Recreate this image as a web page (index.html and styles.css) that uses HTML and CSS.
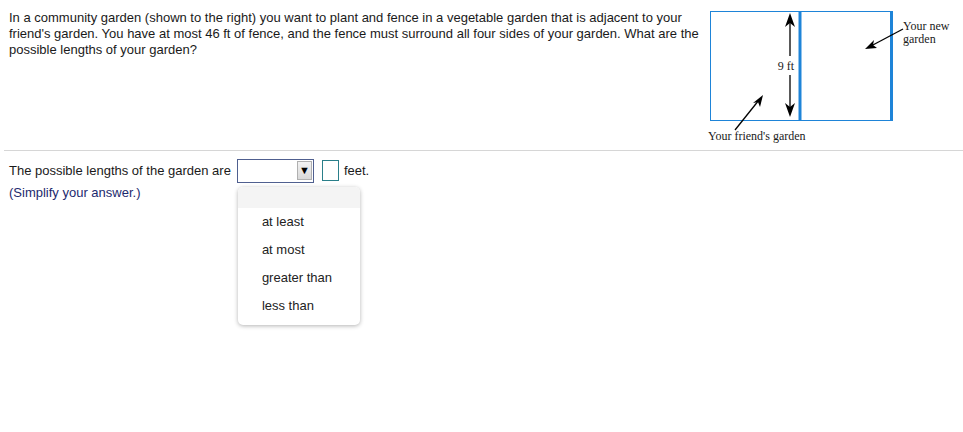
FILE: index.html
```html
<!DOCTYPE html>
<html>
<head>
<meta charset="utf-8">
<link rel="stylesheet" href="styles.css">
</head>
<body>
<div class="question">
  <p class="prompt">In a community garden (shown to the right) you want to plant and fence in a vegetable garden that is adjacent to your friend's garden. You have at most 46 ft of fence, and the fence must surround all four sides of your garden. What are the possible lengths of your garden?</p>
  <svg class="diagram" width="263" height="150" viewBox="0 0 263 150">
    <g stroke="#1e84d8" fill="none">
      <line x1="10" y1="11.5" x2="193" y2="11.5" stroke-width="1"/>
      <line x1="10" y1="120.5" x2="193" y2="120.5" stroke-width="1"/>
      <line x1="10.5" y1="11" x2="10.5" y2="121" stroke-width="1"/>
      <line x1="100" y1="11" x2="100" y2="121" stroke-width="3"/>
      <line x1="191.5" y1="11" x2="191.5" y2="121" stroke-width="3"/>
    </g>
    <g stroke="#000" stroke-width="1.3" fill="none">
      <line x1="90" y1="20" x2="90" y2="56"/>
      <line x1="90" y1="75" x2="90" y2="110"/>
      <line x1="35" y1="130" x2="59" y2="100"/>
      <line x1="203" y1="29" x2="171" y2="46"/>
    </g>
    <g fill="#000">
      <polygon points="90,13 85,27 90,23 95,27"/>
      <polygon points="90,117 85,103 90,107 95,103"/>
      <polygon points="63,95 53,103 58,102 60,107"/>
      <polygon points="165,49 177,48 173,45 174,40"/>
    </g>
    <g class="svgtext">
      <text x="86" y="70" text-anchor="middle">9 ft</text>
      <text x="8" y="140">Your friend's garden</text>
      <text x="203" y="30">Your new</text>
      <text x="203" y="43">garden</text>
    </g>
  </svg>
</div>
<div class="rule"></div>
<div class="answer">
  <div class="answer-row">
    <span class="label">The possible lengths of the garden are</span>
    <span class="select">
      <span class="select-btn">&#9660;</span>
      <span class="menu">
        <span class="menu-item blank"></span>
        <span class="menu-item">at least</span>
        <span class="menu-item">at most</span>
        <span class="menu-item">greater than</span>
        <span class="menu-item">less than</span>
      </span>
    </span>
    <span class="box"></span>
    <span class="label">feet.</span>
  </div>
  <div class="hint">(Simplify your answer.)</div>
</div>
</body>
</html>
```
FILE: styles.css
```css
html, body {
  margin: 0;
  padding: 0;
  background: #fff;
}
body {
  font-family: "Liberation Sans", Arial, sans-serif;
  font-size: 13px;
  color: #1a1a1a;
  width: 963px;
  height: 432px;
  overflow: hidden;
}
.question {
  display: flex;
  height: 150px;
}
.prompt {
  margin: 0;
  padding: 10px 0 0 9px;
  width: 691px;
  line-height: 16px;
}
.diagram {
  display: block;
  flex: none;
}
.svgtext text {
  font-family: "Liberation Serif", "Times New Roman", serif;
  font-size: 12px;
  fill: #1a1a1a;
}
.rule {
  margin: 0 0 0 4px;
  height: 1px;
  background: #d6d6d6;
}
.answer {
  padding: 7px 0 0 9px;
}
.answer-row {
  display: flex;
  align-items: center;
  height: 25px;
}
.label {
  line-height: 16px;
}
.select {
  position: relative;
  margin-left: 6px;
  width: 75px;
  height: 22px;
  border: 1px solid #4f5f8f;
  display: flex;
  justify-content: flex-end;
  align-items: center;
}
.select-btn {
  width: 15px;
  height: 19px;
  margin-right: 1px;
  background: linear-gradient(#f2f2f2, #d9d9d9);
  border: 1px solid #b0b0b0;
  box-sizing: border-box;
  font-size: 11px;
  line-height: 17px;
  text-align: center;
  color: #000;
}
.box {
  margin-left: 8px;
  width: 15px;
  height: 19px;
  border: 1px solid #2a7f8a;
}
.box + .label {
  margin-left: 5px;
}
.hint {
  margin-top: 2px;
  line-height: 16px;
  color: #1c2a6e;
}
.menu {
  position: absolute;
  left: 0;
  top: 27px;
  width: 122px;
  background: #fff;
  border-radius: 5px;
  box-shadow: 0 1px 4px rgba(0,0,0,0.3);
  display: flex;
  flex-direction: column;
  padding-bottom: 5px;
  overflow: hidden;
}
.menu-item {
  display: block;
  height: 28px;
  line-height: 28px;
  padding-left: 24px;
  color: #222;
}
.menu-item.blank {
  height: 21px;
  background: #f4f4f4;
}
```
